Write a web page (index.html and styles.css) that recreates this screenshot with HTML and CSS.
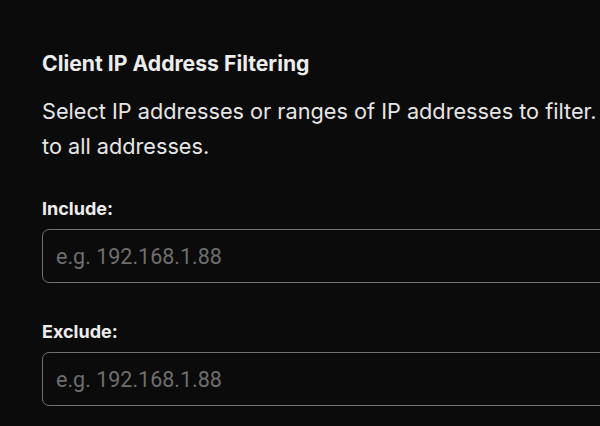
FILE: index.html
```html
<!DOCTYPE html>
<html lang="en">
<head>
    <meta charset="UTF-8">
    <meta name="viewport" content="width=device-width, initial-scale=1.0">
    <title>Client IP Address Filtering</title>
    <link rel="stylesheet" href="styles.css">
</head>
<body>
    <div class="filter">
        <h2 class="title">Client IP Address Filtering</h2>
        <p class="desc">Select IP addresses or ranges of IP addresses to filter. If none are selected, the filter will be applied to all addresses.</p>

        <label for="include" class="fieldLabel">Include:</label>
        <input id="include" type="text" placeholder="e.g. 192.168.1.88">

        <label for="exclude" class="fieldLabel">Exclude:</label>
        <input id="exclude" type="text" placeholder="e.g. 192.168.1.88">
    </div>
</body>
</html>
```

FILE: styles.css
```css
html, body {
    margin: 0;
    padding: 0;
    background: #0b0b0b;
    color: #ececec;
    font-family: Inter, "Noto Sans", sans-serif;
    overflow: hidden;
}

.filter {
    width: 1020px;
    padding: 51px 0 0 42px;
    display: flex;
    flex-direction: column;
}

.title {
    margin: 0;
    font-size: 21.2px;
    line-height: 24px;
    font-weight: 700;
    color: #ededed;
}

.desc {
    margin: 19px 0 0;
    font-size: 21.7px;
    line-height: 35px;
    color: #e6e6e6;
}

.fieldLabel {
    margin-top: 34px;
    font-size: 18px;
    line-height: 22px;
    font-weight: 700;
    color: #ededed;
}

.fieldLabel + input {
    margin-top: 9px;
}

.fieldLabel:nth-of-type(2) {
    margin-top: 38px;
}

input {
    box-sizing: border-box;
    width: 100%;
    height: 54px;
    padding: 0 13px;
    background: #0b0b0b;
    color: #e6e6e6;
    border: 1px solid #707070;
    border-radius: 7px;
    font-family: Roboto, "Liberation Sans", sans-serif;
    font-size: 21.5px;
    outline: none;
}

input::placeholder {
    color: #6e6e6e;
}
```
